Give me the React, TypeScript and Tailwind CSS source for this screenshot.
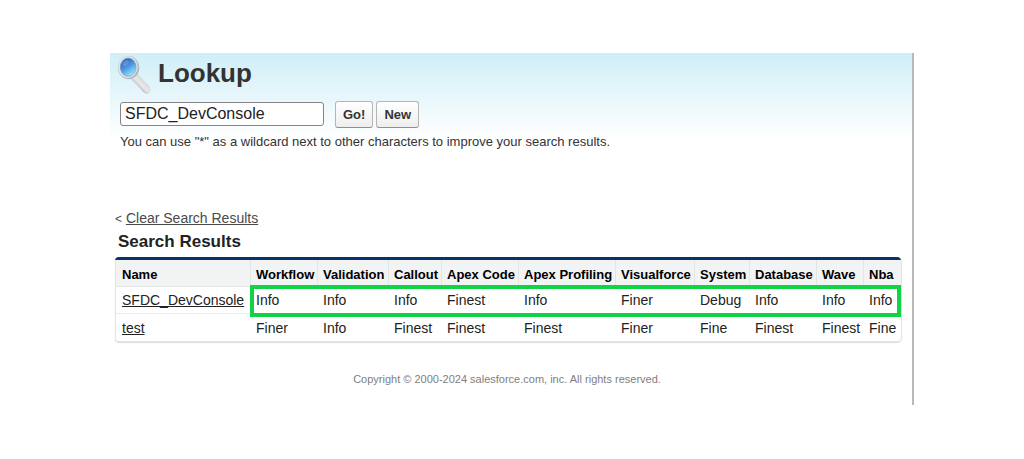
const columns = [
  { name: "Workflow", width: "w-[67px]" },
  { name: "Validation", width: "w-[71px]" },
  { name: "Callout", width: "w-[53px]" },
  { name: "Apex Code", width: "w-[77px]" },
  { name: "Apex Profiling", width: "w-[97px]" },
  { name: "Visualforce", width: "w-[79px]" },
  { name: "System", width: "w-[55px]" },
  { name: "Database", width: "w-[67px]" },
  { name: "Wave", width: "w-[47px]" },
  { name: "Nba", width: "w-[38px]" },
];

const rows = [
  {
    name: "SFDC_DevConsole",
    levels: ["Info", "Info", "Info", "Finest", "Info", "Finer", "Debug", "Info", "Info", "Info"],
  },
  {
    name: "test",
    levels: ["Finer", "Info", "Finest", "Finest", "Finest", "Finer", "Fine", "Finest", "Finest", "Fine"],
  },
];

function MagnifierIcon() {
  return (
    <svg className="h-11 w-9 shrink-0" viewBox="0 0 36 44" aria-hidden="true">
      <defs>
        <linearGradient id="lens" x1="0.2" y1="0" x2="0.75" y2="1">
          <stop offset="0" stopColor="#2558b4" />
          <stop offset="0.5" stopColor="#4c9ae2" />
          <stop offset="1" stopColor="#a5f1fa" />
        </linearGradient>
        <linearGradient id="rim" x1="0" y1="0" x2="1" y2="1">
          <stop offset="0" stopColor="#d5dee5" />
          <stop offset="0.5" stopColor="#c3c9d0" />
          <stop offset="1" stopColor="#a3a7ae" />
        </linearGradient>
        <linearGradient id="handle" x1="0.2" y1="0.7" x2="0.7" y2="0.2">
          <stop offset="0" stopColor="#a5a5a8" />
          <stop offset="0.45" stopColor="#e9e9ea" />
          <stop offset="1" stopColor="#cfd0d3" />
        </linearGradient>
      </defs>
      <path d="M15 26 21 22 34 36Q35 40 30 41Z" fill="#8d9398" opacity="0.4" />
      <path d="M15 25.500 21.500 20.500 33.500 33.500Q35.500 37 32.500 39.500 30 41 27 39L18 28Z" fill="url(#handle)" />
      <ellipse cx="12.500" cy="14.500" rx="10.800" ry="11.700" fill="url(#rim)" />
      <ellipse cx="12" cy="14.200" rx="9.500" ry="10.700" fill="#e3e9ed" />
      <ellipse cx="12.200" cy="14.200" rx="7.900" ry="9.200" fill="url(#lens)" stroke="#7295bd" strokeWidth="0.6" />
      <ellipse cx="9.500" cy="10" rx="3.500" ry="2.500" fill="#dcecff" opacity="0.2" transform="rotate(-35 9.500 10)" />
    </svg>
  );
}

const buttonClass =
  "h-[27px] rounded-[3px] border border-[#b5b5b5] border-b-[#8f8f8f] bg-linear-to-b from-white to-[#eeeeef] px-[7px] text-[13px] leading-4 font-bold text-[#333]";

export default function App() {
  return (
    <div className="bg-white px-[110px] py-[53px] font-['Liberation_Sans',Arial,sans-serif] text-[#333]">
      <main className="border-r-2 border-[#b9b9b9] bg-white bg-linear-to-b from-[#cfeef8] to-white to-[86px] pb-[18px]">
        <form className="px-[10px]" onSubmit={(e) => e.preventDefault()}>
          <header className="-ml-1 flex h-12 items-start gap-1">
            <MagnifierIcon />
            <h1 className="pt-1 pl-[2px] text-[26px] leading-8 font-bold">Lookup</h1>
          </header>
          <div className="flex items-start">
            <input
              type="text"
              aria-label="Search"
              defaultValue="SFDC_DevConsole"
              className="mt-px mr-[11px] h-6 w-[204px] rounded-[3px] border border-[#858585] bg-white px-1 text-base leading-5 text-[#222]"
            />
            <div className="flex gap-[3px]">
              <button type="submit" className={buttonClass}>
                Go!
              </button>
              <button type="button" className={buttonClass}>
                New
              </button>
            </div>
          </div>
          <p className="pt-[6px] text-[13px] leading-4">
            You can use "*" as a wildcard next to other characters to improve your search results.
          </p>
        </form>

        <section className="pt-[58px] pr-[11px] pl-[5px]">
          <p className="text-sm leading-5 text-[#4a4a4a]">
            <span className="text-xs">&lt;</span>{" "}
            <a href="#clear" className="underline">
              Clear Search Results
            </a>
          </p>
          <h2 className="px-[3px] pt-1 text-[17px] leading-5 font-bold text-[#222]">Search Results</h2>
          <div className="relative mt-[5px] rounded border-t-[3px] border-t-[#06346a] shadow-[0_1px_1px_#dedede]">
            <table className="w-full table-fixed border-separate border-spacing-0 overflow-hidden rounded-b border-x border-b border-[#e3e3e3] text-left text-sm leading-5 whitespace-nowrap">
              <thead className="bg-[#f2f3f3] text-[13px] text-black">
                <tr className="h-[27px]">
                  <th scope="col" className="w-[134px] border-b border-[#e3e5e6] pt-[3px] pl-[6px]">
                    Name
                  </th>
                  {columns.map((c) => (
                    <th key={c.name} scope="col" className={`${c.width} border-b border-l border-[#e3e5e6] pt-[3px] pl-[5px]`}>
                      {c.name}
                    </th>
                  ))}
                </tr>
              </thead>
              <tbody className="text-[#222]">
                {rows.map((r) => (
                  <tr key={r.name} className="group h-[27px]">
                    <th scope="row" className="border-b border-[#ececec] pl-[6px] font-normal group-last:border-b-0">
                      <a href={`#${r.name}`} className="underline">
                        {r.name}
                      </a>
                    </th>
                    {r.levels.map((level, i) => (
                      <td key={columns[i].name} className="border-b border-[#ececec] pl-[6px] group-last:border-b-0">
                        {level}
                      </td>
                    ))}
                  </tr>
                ))}
              </tbody>
            </table>
            <div className="pointer-events-none absolute top-[25px] right-0 left-[135px] h-8 border-4 border-[#10d345]" />
          </div>
        </section>

        <footer className="pt-[29px] pr-2 text-center text-[11px] leading-4 text-[#808080]">
          Copyright © 2000-2024 salesforce.com, inc. All rights reserved.
        </footer>
      </main>
    </div>
  );
}
